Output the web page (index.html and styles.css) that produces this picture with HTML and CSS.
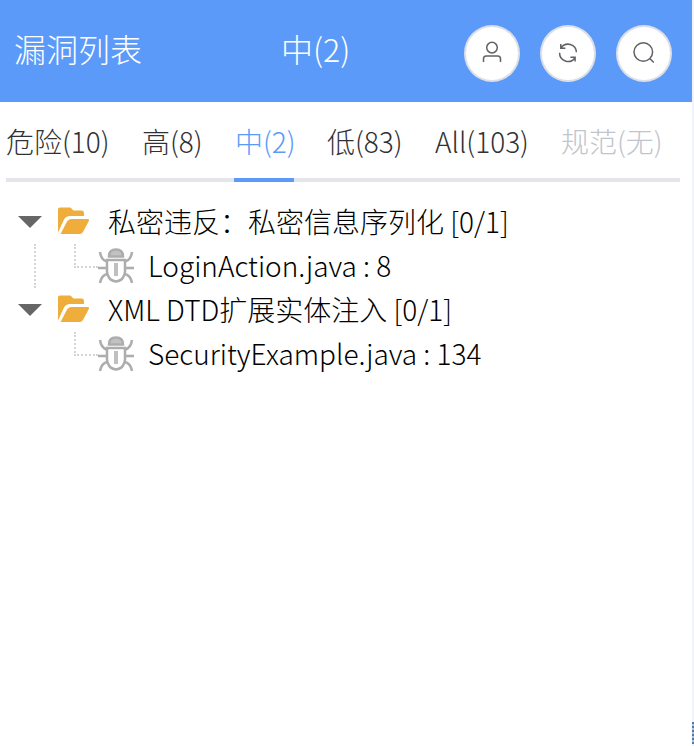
FILE: index.html
```html
<!DOCTYPE html>
<html lang="zh-CN">
<head>
<meta charset="utf-8">
<title>漏洞列表</title>
<link rel="stylesheet" href="styles.css">
</head>
<body>
<div class="app">
  <main class="panel">
    <header class="header">
      <div class="title">漏洞列表</div>
      <div class="current">中(2)</div>
      <div class="actions">
        <button class="round" aria-label="user"><svg width="24" height="24" viewBox="0 0 24 24"><circle cx="12" cy="6.600" r="5.300"/><path d="M3.500 21v-3.200q0-2.800 2.800-2.800h11.400q2.800 0 2.800 2.800v3.200"/></svg></button>
        <button class="round" aria-label="refresh"><svg width="24" height="24" viewBox="0 0 24 24"><path d="M20.400 11.200A8.400 8.400 0 0 0 5.200 6.700M4.800 3v4.200h4.600M3.600 11.800A8.400 8.400 0 0 0 18.800 17M14.400 16.200h4.700v4.300"/></svg></button>
        <button class="round" aria-label="search"><svg width="24" height="24" viewBox="0 0 24 24"><circle cx="11.300" cy="11" r="9.300"/><path d="M17.800 17.500l4 4"/></svg></button>
      </div>
    </header>
    <nav class="tabs">
      <div class="tab wide">危险(10)</div>
      <div class="tab">高(8)</div>
      <div class="tab active">中(2)</div>
      <div class="tab low">低(83)</div>
      <div class="tab all">All(103)</div>
      <div class="tab disabled">规范(无)</div>
    </nav>
    <section class="tree">
      <div class="row">
        <i class="arrow"></i>
        <svg class="folder" width="32" height="28" viewBox="0 0 32 28"><path d="M0 25.500V2q0-1.500 2-1.500h10.500l3 3h8q2.500 0 2.500 2.500v3H12q-4 0-6 3.500z"/><path d="M2.500 27l6-11.500q1.700-3.500 5-3.500h16q2.300 0 1.300 2l-5.800 11q-1 2-3.500 2z"/></svg>
        <span class="label">私密违反：私密信息序列化 [0/1]</span>
      </div>
      <div class="row child">
        <span class="rail"></span><span class="elbow"></span>
        <svg class="bug" width="36" height="36" viewBox="0 0 36 36"><path class="head" d="M11 8.500q0-7 7-7t7 7z"/><path d="M9 12h18v12q-1 8.500-9 9.500-8-1-9-9.500z"/><path class="spine" d="M18 15v13"/><path d="M9 13.500Q3 12 2 4M27 13.500q6-1.500 7-9.500M0 20h9M27 20h9M9.500 26q-6 1-7.500 9M26.500 26q6 1 7.500 9"/></svg>
        <span class="label">LoginAction.java : 8</span>
      </div>
      <div class="row">
        <i class="arrow"></i>
        <svg class="folder" width="32" height="28" viewBox="0 0 32 28"><path d="M0 25.500V2q0-1.500 2-1.500h10.500l3 3h8q2.500 0 2.500 2.500v3H12q-4 0-6 3.500z"/><path d="M2.500 27l6-11.500q1.700-3.500 5-3.500h16q2.300 0 1.300 2l-5.800 11q-1 2-3.500 2z"/></svg>
        <span class="label">XML DTD扩展实体注入 [0/1]</span>
      </div>
      <div class="row child">
        <span class="rail hidden"></span><span class="elbow"></span>
        <svg class="bug" width="36" height="36" viewBox="0 0 36 36"><path class="head" d="M11 8.500q0-7 7-7t7 7z"/><path d="M9 12h18v12q-1 8.500-9 9.500-8-1-9-9.500z"/><path class="spine" d="M18 15v13"/><path d="M9 13.500Q3 12 2 4M27 13.500q6-1.500 7-9.500M0 20h9M27 20h9M9.500 26q-6 1-7.500 9M26.500 26q6 1 7.500 9"/></svg>
        <span class="label">SecurityExample.java : 134</span>
      </div>
    </section>
  </main>
  <aside class="edge"><div class="stripes"></div></aside>
</div>
</body>
</html>
```
FILE: styles.css
```css
* { box-sizing: border-box; }
body { margin: 0; background: #fff; color: #303133; font: 300 28px/40px "Noto Sans CJK SC", sans-serif; }
.app { display: flex; width: 694px; height: 746px; overflow: hidden; }
.panel { width: 692px; }
.edge { width: 2px; background: #f2f2fa; padding-top: 722px; }
.stripes { height: 22px; background: repeating-linear-gradient(#5878a0 0 2px, #a8c4e8 2px 4px); }
.header { height: 102px; background: #5b9af8; color: #fff; display: flex; align-items: center; padding-left: 14px; font-size: 32px; }
.title { width: 267px; margin-top: -6px; }
.current { width: 183px; margin-top: -6px; }
.actions { display: flex; gap: 20px; margin-top: 4px; }
.round { width: 56px; height: 57px; padding: 0; border: 2px solid #dcdfe6; border-radius: 50%; background: #fff; display: flex; align-items: center; justify-content: center; }
.round svg { fill: none; stroke: #606266; stroke-width: 1.5; }
.tabs { display: flex; gap: 32px; height: 80px; margin: 0 12px 0 6px; padding-top: 19px; border-bottom: 4px solid #e4e4eb; white-space: nowrap; }
.tab { width: 60px; height: 61px; flex: none; }
.wide { width: 104px; }
.low { width: 76px; text-indent: 1px; }
.all { width: 94px; text-indent: 1px; }
.active { color: #5b9af8; border-bottom: 4px solid #5b9af8; text-indent: 1px; }
.disabled { color: #c0c4cc; width: 102px; text-indent: 1px; }
.tree { padding-top: 18px; color: #000; }
.row { display: flex; height: 44px; align-items: center; padding-left: 18px; white-space: nowrap; }
.arrow { border: 12px solid transparent; border-top-color: #666; border-bottom: 0; }
.folder { margin: -2px 18px 0 16px; fill: #efad3b; }
.label { margin-top: -2px; }
.child { padding-left: 34px; }
.rail { width: 2px; height: 44px; border-left: 2px dotted #d4d4d4; }
.hidden { visibility: hidden; }
.elbow { width: 24px; height: 24px; margin: 0 0 20px 38px; border: dotted #d4d4d4; border-width: 0 0 2px 2px; }
.bug { margin-right: 14px; fill: none; stroke: #adadad; stroke-width: 2.5; }
.bug .head { fill: #c2c2c2; }
.bug .spine { stroke: #c0c0c0; stroke-width: 4; }
```
